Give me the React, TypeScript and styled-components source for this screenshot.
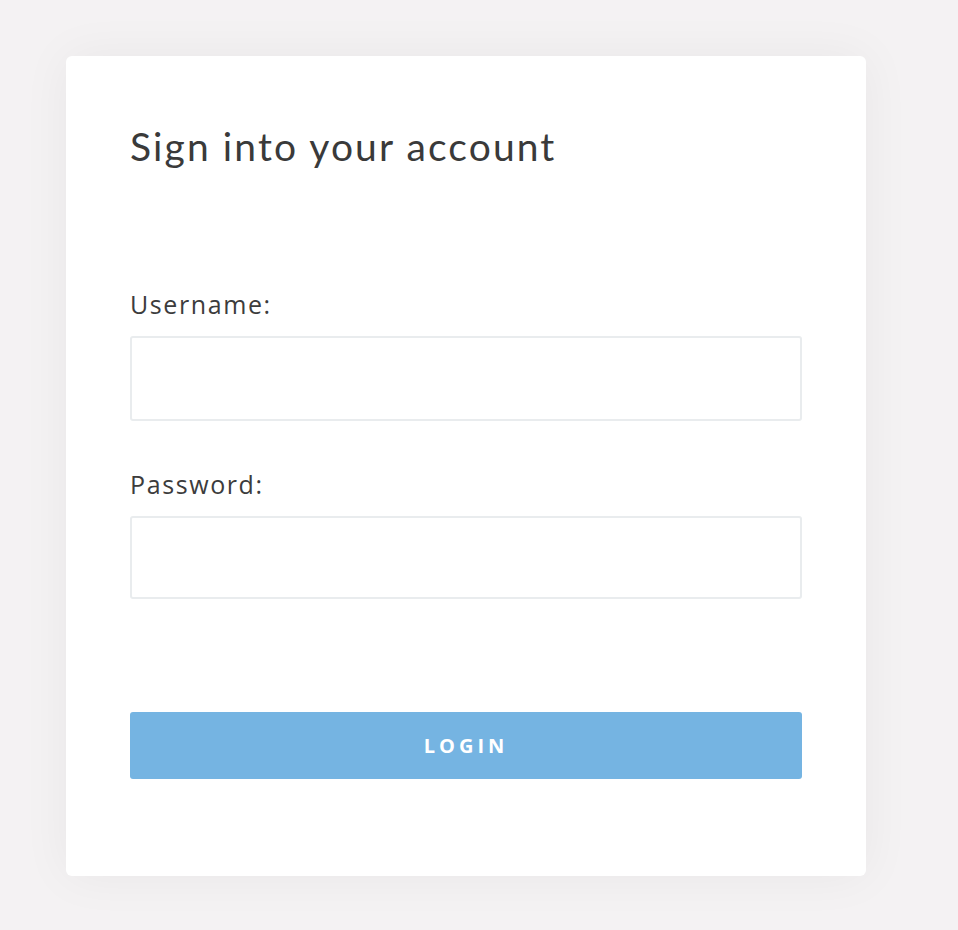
import React from 'react';
import styled, {createGlobalStyle} from 'styled-components';

const GlobalStyle = createGlobalStyle`
  html, body {
    margin: 0;
    padding: 0;
    background: #f4f2f3;
  }
  * {
    box-sizing: border-box;
  }
`;

function App() {
  return (
    <>
      <GlobalStyle />
      <Login.Page>
        <Login.Card>
          <Login.Title>Sign into your account</Login.Title>
          <Login.Form onSubmit={(e) => e.preventDefault()}>
            <Login.Field>
              <Login.Label htmlFor="username">Username:</Login.Label>
              <Login.Input id="username" type="text" $height={85} />
            </Login.Field>
            <Login.Field $last>
              <Login.Label htmlFor="password">Password:</Login.Label>
              <Login.Input id="password" type="password" $height={83} />
            </Login.Field>
            <Login.Button type="submit">Login</Login.Button>
          </Login.Form>
        </Login.Card>
      </Login.Page>
    </>
  );
}

export default App;

const Login = {
  Page: styled.div`
    min-height: 930px;
    padding: 56px 0 0 66px;
  `,
  Card: styled.div`
    width: 800px;
    height: 820px;
    padding: 68px 64px 0;
    background: #ffffff;
    border-radius: 6px;
    box-shadow: 0 0 50px rgba(0, 0, 0, 0.05);
  `,
  Title: styled.h1`
    margin: 0;
    font-family: 'Lato', 'Open Sans', sans-serif;
    font-weight: 400;
    font-size: 39px;
    line-height: 44px;
    color: #3a3a3a;
    letter-spacing: 2.1px;
  `,
  Form: styled.form`
    display: flex;
    flex-direction: column;
    margin-top: 119px;
  `,
  Field: styled.div<{$last?: boolean}>`
    display: flex;
    flex-direction: column;
    margin-bottom: ${({$last}) => ($last ? '113px' : '46px')};
  `,
  Label: styled.label`
    font-family: 'Open Sans', sans-serif;
    font-size: 25px;
    line-height: 34px;
    color: #3c3c3c;
    letter-spacing: 1.6px;
    margin-bottom: 15px;
  `,
  Input: styled.input<{$height: number}>`
    width: 672px;
    height: ${({$height}) => $height}px;
    border: 2px solid #e9ecee;
    border-radius: 3px;
    background: #fff;
    font-family: 'Open Sans', sans-serif;
    font-size: 20px;
    padding: 0 16px;
    outline: none;
  `,
  Button: styled.button`
    width: 672px;
    height: 67px;
    border: none;
    border-radius: 3px;
    background: #75b4e2;
    color: #ffffff;
    font-family: 'Open Sans', sans-serif;
    font-weight: 700;
    font-size: 20px;
    letter-spacing: 4px;
    text-transform: uppercase;
    padding: 0;
    cursor: pointer;
  `,
};
